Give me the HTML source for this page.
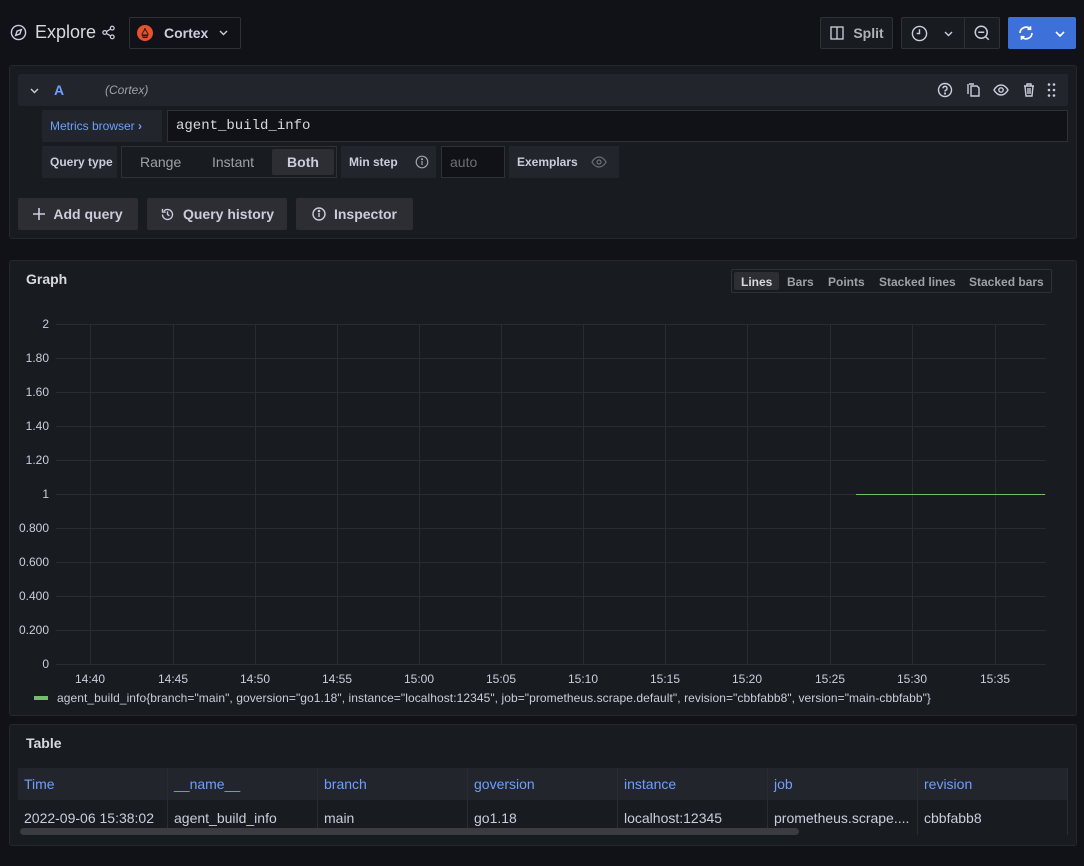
<!DOCTYPE html>
<html><head><meta charset="utf-8"><style>
*{box-sizing:border-box;margin:0;padding:0}
body{width:1084px;height:866px;background:#111217;font-family:"Liberation Sans",sans-serif;color:#ccccdc;position:relative;overflow:hidden;font-size:14px}
.a{position:absolute}
.btn{position:absolute;background:#2c2e33;border-radius:2px;color:#ccccdc;font-weight:bold;font-size:14px;display:flex;align-items:center;justify-content:center;gap:8px}
.panel{position:absolute;background:#181b1f;border:1px solid #25272c;border-radius:3px}
.lbl{position:absolute;background:#22252b;font-weight:bold;font-size:12px;display:flex;align-items:center;padding-left:8px;color:#ccccdc}
.yl{position:absolute;right:1035px;font-size:12px;color:#ccccdc;text-align:right}
.xl{position:absolute;top:672px;font-size:12px;width:40px;margin-left:-20px;text-align:center}
.th,.td{position:absolute;width:150px;padding-left:6px;font-size:14px;border-right:1px solid #2a2c31;display:flex;align-items:center}
.th{top:768px;height:32px;background:#22252b;color:#6e9fff}
.td{top:800px;height:35px;color:#ccccdc;white-space:nowrap;overflow:hidden}
svg{display:block}
</style></head><body>
<svg class="a" style="left:10px;top:24px" width="17" height="17" viewBox="0 0 24 24" fill="none" stroke="#ccccdc" stroke-width="2"><circle cx="12" cy="12" r="10"/><path d="M16 8l-2 6-6 2 2-6z"/></svg>
<div class="a" style="left:35px;top:22px;font-size:18px;color:#d8d9e0">Explore</div>
<svg class="a" style="left:101px;top:25px" width="15" height="15" viewBox="0 0 24 24" fill="none" stroke="#ccccdc" stroke-width="2"><circle cx="18" cy="5" r="3"/><circle cx="6" cy="12" r="3"/><circle cx="18" cy="19" r="3"/><path d="M8.6 13.5l6.8 4M15.4 6.5l-6.8 4"/></svg>
<div class="a" style="left:129px;top:17px;width:112px;height:32px;border:1px solid #2f3136;border-radius:2px;background:#111217"></div>
<svg class="a" style="left:137px;top:25px" width="16" height="16" viewBox="0 0 16 16"><circle cx="8" cy="8" r="8" fill="#e6522c"/><path d="M5 11h6M5.5 12.5h5M5 10c0-3 3-4 3-7 0 3 3 4 3 7z" stroke="#1d1f24" stroke-width="1" fill="none"/></svg>
<div class="a" style="left:164px;top:25px;font-size:14px;font-weight:bold;color:#ccccdc">Cortex</div>
<svg class="a" style="left:219px;top:30px" width="9" height="6" viewBox="0 0 9 6" fill="none" stroke="#ccccdc" stroke-width="1.4"><path d="M1 1l3.5 3.5L8 1"/></svg>
<div class="btn" style="left:820px;top:17px;width:73px;height:32px;background:#181b1f;border:1px solid #2f3136;color:#b0b2b8"><svg width="16" height="16" viewBox="0 0 24 24" fill="none" stroke="#ccccdc" stroke-width="2"><rect x="3" y="3" width="18" height="18"/><path d="M12 3v18"/></svg>Split</div>
<div class="a" style="left:901px;top:17px;width:99px;height:32px;background:#181b1f;border:1px solid #2f3136;border-radius:2px"></div>
<div class="a" style="left:964px;top:17px;width:1px;height:32px;background:#2f3136"></div>
<svg class="a" style="left:911px;top:25px" width="17" height="17" viewBox="0 0 24 24" fill="none" stroke="#ccccdc" stroke-width="2"><circle cx="12" cy="12" r="10"/><path d="M12 6v6h-4"/></svg>
<svg class="a" style="left:944px;top:31px" width="9" height="6" viewBox="0 0 9 6" fill="none" stroke="#ccccdc" stroke-width="1.4"><path d="M1 1l3.5 3.5L8 1"/></svg>
<svg class="a" style="left:973px;top:24px" width="18" height="18" viewBox="0 0 24 24" fill="none" stroke="#ccccdc" stroke-width="2"><circle cx="11" cy="11" r="8"/><path d="M7 11h8M17 17l4 4"/></svg>
<div class="a" style="left:1008px;top:17px;width:68px;height:32px;background:#3d71d9;border-radius:2px"></div>
<svg class="a" style="left:1017px;top:24px" width="18" height="18" viewBox="0 0 24 24" fill="none" stroke="#fff" stroke-width="2.2"><path d="M20 12a8 8 0 0 1-14 5M4 12a8 8 0 0 1 14-5M18 3v4h-4M6 21v-4h4"/></svg>
<svg class="a" style="left:1055px;top:31px" width="10" height="6" viewBox="0 0 10 6" fill="none" stroke="#fff" stroke-width="1.6"><path d="M1 1l4 4 4-4"/></svg>
<!-- query panel -->
<div class="panel" style="left:9px;top:65px;width:1068px;height:174px"></div>
<div class="a" style="left:18px;top:74px;width:1050px;height:32px;background:#22252b;border-radius:2px"></div>
<svg class="a" style="left:30px;top:88px" width="9" height="6" viewBox="0 0 9 6" fill="none" stroke="#ccccdc" stroke-width="1.4"><path d="M1 1l3.5 3.5L8 1"/></svg>
<div class="a" style="left:54px;top:82px;font-weight:bold;color:#6e9fff;font-size:14px">A</div>
<div class="a" style="left:105px;top:83px;font-style:italic;font-size:12px;color:#9fa1a8">(Cortex)</div>
<svg class="a" style="left:937px;top:82px" width="122" height="16" viewBox="0 0 122 16" fill="none" stroke="#ccccdc" stroke-width="1.4">
<circle cx="8" cy="8" r="6.5"/><path d="M6 6.3a2 2 0 1 1 2.5 2c-.5.2-.5.6-.5 1.3"/><circle cx="8" cy="11.5" r=".4" fill="#ccccdc"/>
<path d="M34 4h6l2 2v8h-8zM32 2h5M31 2v10"/>
<path d="M57 8c2-3.5 4.5-5 7-5s5 1.5 7 5c-2 3.5-4.5 5-7 5s-5-1.5-7-5z"/><circle cx="64" cy="8" r="2.2"/>
<path d="M87 4h10M90 4V2h4v2M88 4l1 10h6l1-10M91 6v6M93 6v6"/>
<g fill="#ccccdc" stroke="none"><circle cx="112" cy="2.5" r="1.3"/><circle cx="117" cy="2.5" r="1.3"/><circle cx="112" cy="8" r="1.3"/><circle cx="117" cy="8" r="1.3"/><circle cx="112" cy="13.5" r="1.3"/><circle cx="117" cy="13.5" r="1.3"/></g>
</svg>
<div class="lbl" style="left:42px;top:110px;width:120px;height:32px;color:#6e9fff;font-weight:normal">Metrics browser&nbsp;<b>&#8250;</b></div>
<div class="a" style="left:167px;top:110px;width:901px;height:32px;background:#111217;border:1px solid #2f3136;font-family:'Liberation Mono',monospace;font-size:14px;padding:7px 8px;color:#d8d9e0">agent_build_info</div>
<div class="lbl" style="left:42px;top:146px;width:75px;height:32px">Query type</div>
<div class="a" style="left:121px;top:146px;width:216px;height:32px;border:1px solid #2f3136"></div>
<div class="a" style="left:140px;top:154px;color:#9fa1a8">Range</div>
<div class="a" style="left:212px;top:154px;color:#9fa1a8">Instant</div>
<div class="a" style="left:272px;top:149px;width:62px;height:26px;background:#2c2e33;border-radius:2px;font-weight:bold;text-align:center;line-height:26px">Both</div>
<div class="lbl" style="left:341px;top:146px;width:95px;height:32px">Min step</div>
<svg class="a" style="left:415px;top:155px" width="14" height="14" viewBox="0 0 14 14" fill="none" stroke="#9fa1a8" stroke-width="1.2"><circle cx="7" cy="7" r="5.8"/><path d="M7 6v4"/><circle cx="7" cy="4.2" r=".5" fill="#9fa1a8"/></svg>
<div class="a" style="left:441px;top:146px;width:64px;height:32px;background:#111217;border:1px solid #2f3136;padding:7px 8px;color:#6d6f76">auto</div>
<div class="lbl" style="left:509px;top:146px;width:110px;height:32px">Exemplars</div>
<svg class="a" style="left:591px;top:155px" width="16" height="14" viewBox="0 0 16 14" fill="none" stroke="#6d6f76" stroke-width="1.2"><path d="M1 7c2-3.5 4.5-5 7-5s5 1.5 7 5c-2 3.5-4.5 5-7 5s-5-1.5-7-5z"/><circle cx="8" cy="7" r="2"/></svg>
<div class="btn" style="left:18px;top:198px;width:120px;height:32px"><svg width="12" height="12" viewBox="0 0 12 12" stroke="#ccccdc" stroke-width="1.6"><path d="M6 0v12M0 6h12"/></svg>Add query</div>
<div class="btn" style="left:147px;top:198px;width:140px;height:32px"><svg width="15" height="15" viewBox="0 0 24 24" fill="none" stroke="#ccccdc" stroke-width="2.2"><path d="M4 12a8 8 0 1 0 2.5-5.8M4 3v5h5M12 7v5l3 2"/></svg>Query history</div>
<div class="btn" style="left:296px;top:198px;width:117px;height:32px"><svg width="14" height="14" viewBox="0 0 14 14" fill="none" stroke="#ccccdc" stroke-width="1.4"><circle cx="7" cy="7" r="6"/><path d="M7 6v4"/><circle cx="7" cy="4" r=".6" fill="#ccccdc"/></svg>Inspector</div>
<!-- graph panel -->
<div class="panel" style="left:9px;top:260px;width:1068px;height:456px"></div>
<div class="a" style="left:26px;top:271px;font-weight:bold;font-size:14px;color:#d8d9e0">Graph</div>
<div class="a" style="left:731px;top:269px;width:321px;height:24px;border:1px solid #2f3136;border-radius:2px"></div>
<div class="a" style="left:734px;top:272px;width:45px;height:18px;background:#2c2e33;border-radius:2px"></div>
<div class="a" style="left:741px;top:275px;font-size:12px;font-weight:bold;color:#d8d9e0">Lines</div>
<div class="a" style="left:787px;top:275px;font-size:12px;font-weight:bold;color:#9fa1a8">Bars</div>
<div class="a" style="left:828px;top:275px;font-size:12px;font-weight:bold;color:#9fa1a8">Points</div>
<div class="a" style="left:879px;top:275px;font-size:12px;font-weight:bold;color:#9fa1a8">Stacked lines</div>
<div class="a" style="left:969px;top:275px;font-size:12px;font-weight:bold;color:#9fa1a8">Stacked bars</div>
<svg class="a" style="left:0;top:0" width="1084" height="700">
<g stroke="#2a2c31" stroke-width="1">
<path d="M56 324.5H1046M56 358.5H1046M56 392.5H1046M56 426.5H1046M56 460.5H1046M56 494.5H1046M56 528.5H1046M56 562.5H1046M56 596.5H1046M56 630.5H1046M56 664.5H1046"/>
<path d="M90.5 324V664M173.5 324V664M255.5 324V664M337.5 324V664M419.5 324V664M501.5 324V664M583.5 324V664M665.5 324V664M747.5 324V664M830.5 324V664M912.5 324V664M995.5 324V664"/>
</g>
<path d="M856 494.5H1045" stroke="#73bf69" stroke-width="1"/>
<rect x="34" y="696" width="14" height="4" fill="#73bf69"/>
</svg>
<div class="yl" style="top:317px">2</div><div class="yl" style="top:351px">1.80</div><div class="yl" style="top:385px">1.60</div><div class="yl" style="top:419px">1.40</div><div class="yl" style="top:453px">1.20</div><div class="yl" style="top:487px">1</div><div class="yl" style="top:521px">0.800</div><div class="yl" style="top:555px">0.600</div><div class="yl" style="top:589px">0.400</div><div class="yl" style="top:623px">0.200</div><div class="yl" style="top:657px">0</div>
<div class="xl" style="left:90px">14:40</div><div class="xl" style="left:173px">14:45</div><div class="xl" style="left:255px">14:50</div><div class="xl" style="left:337px">14:55</div><div class="xl" style="left:419px">15:00</div><div class="xl" style="left:501px">15:05</div><div class="xl" style="left:583px">15:10</div><div class="xl" style="left:665px">15:15</div><div class="xl" style="left:747px">15:20</div><div class="xl" style="left:830px">15:25</div><div class="xl" style="left:912px">15:30</div><div class="xl" style="left:995px">15:35</div>
<div class="a" style="left:57px;top:691px;font-size:12px;color:#ccccdc;white-space:nowrap;letter-spacing:0.07px">agent_build_info{branch="main", goversion="go1.18", instance="localhost:12345", job="prometheus.scrape.default", revision="cbbfabb8", version="main-cbbfabb"}</div>
<!-- table panel -->
<div class="panel" style="left:9px;top:724px;width:1068px;height:122px"></div>
<div class="a" style="left:26px;top:735px;font-weight:bold;font-size:14px;color:#d8d9e0">Table</div>
<div class="th" style="left:18px">Time</div><div class="th" style="left:168px">__name__</div><div class="th" style="left:318px">branch</div><div class="th" style="left:468px">goversion</div><div class="th" style="left:618px">instance</div><div class="th" style="left:768px">job</div><div class="th" style="left:918px">revision</div>
<div class="td" style="left:18px">2022-09-06 15:38:02</div><div class="td" style="left:168px">agent_build_info</div><div class="td" style="left:318px">main</div><div class="td" style="left:468px">go1.18</div><div class="td" style="left:618px">localhost:12345</div><div class="td" style="left:768px">prometheus.scrape....</div><div class="td" style="left:918px">cbbfabb8</div>
<div class="a" style="left:20px;top:828px;width:779px;height:7px;background:#3a3c42;border-radius:4px"></div>
</body></html>
